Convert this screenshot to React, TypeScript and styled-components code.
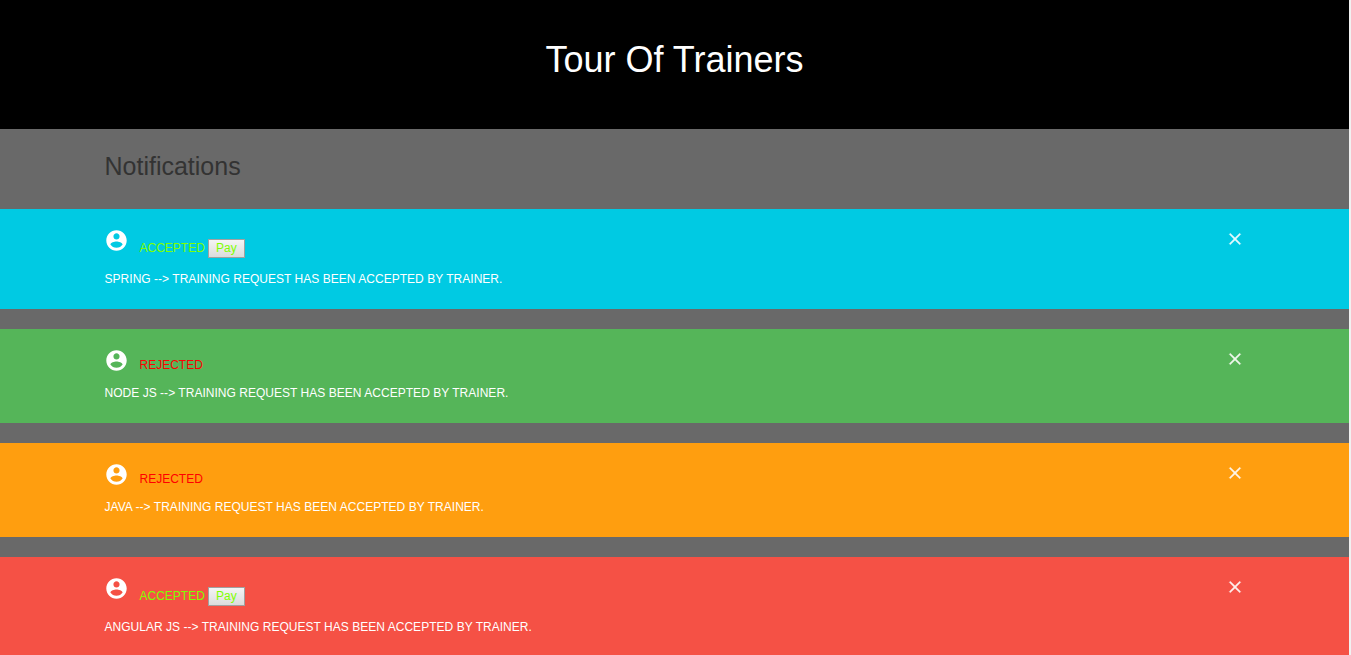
import React from 'react';
import styled, { createGlobalStyle } from 'styled-components';

const GlobalStyle = createGlobalStyle`
  html, body { margin: 0; height: 100%; overflow: hidden; }
  body {
    background: #f1f1f1;
    font-family: Arial, "Liberation Sans", sans-serif;
  }
`;

const Page = styled.div`
  width: calc(100vw - 2px);
  height: 100vh;
  overflow: hidden;
  background: #696969;
`;

const Header = styled.header`
  height: 129px;
  box-sizing: border-box;
  padding-top: 40px;
  background: #000;
  text-align: center;
`;

const Title = styled.h1`
  margin: 0;
  color: #fff;
  font-size: 36px;
  font-weight: 400;
  line-height: 40px;
`;

const Container = styled.div`
  box-sizing: border-box;
  width: 1140px;
  margin: 0 auto;
`;

const Heading = styled.h3`
  margin: 0;
  height: 80px;
  box-sizing: border-box;
  padding-top: 20px;
  color: #333;
  font-size: 25px;
  font-weight: 400;
  line-height: 35px;
`;

const Alert = styled.section<{ $color: string; $tall: boolean }>`
  box-sizing: border-box;
  height: ${(p) => (p.$tall ? 100 : 94)}px;
  margin-bottom: 20px;
  padding-top: 19px;
  background: ${(p) => p.$color};
  color: #fff;
  font-size: 12px;
  line-height: 18px;
  text-transform: uppercase;
`;

const AlertTop = styled.div<{ $tall: boolean }>`
  display: flex;
  align-items: flex-start;
  height: ${(p) => (p.$tall ? 42 : 36)}px;
`;

const Avatar = styled.svg`
  width: 25px;
  height: 25px;
  margin: 0 11px 0 -1px;
  fill: #fff;
`;

const Status = styled.span<{ $accepted: boolean }>`
  margin-top: ${(p) => (p.$accepted ? 11 : 8)}px;
  color: ${(p) => (p.$accepted ? '#7fff00' : '#f00')};
`;

const PayButton = styled.button`
  box-sizing: border-box;
  width: 37px;
  height: 19px;
  margin: 11px 0 0 3px;
  padding: 0;
  border: 1px solid #a0a0a0;
  background: linear-gradient(#f4f4f4, #dcdcdc);
  color: #7fff00;
  font: 12px/15px Arial, "Liberation Sans", sans-serif;
`;

const Close = styled.svg`
  width: 20px;
  height: 20px;
  margin: 1px 0 0 auto;
  fill: #fff;
  stroke: #fff;
  stroke-width: 0.3;
  opacity: 0.9;
`;

const Message = styled.div`
  letter-spacing: 0.03px;
`;

const notices = [
  { topic: 'Spring', accepted: true, color: '#00cae3' },
  { topic: 'Node JS', accepted: false, color: '#55b559' },
  { topic: 'Java', accepted: false, color: '#ff9e0f' },
  { topic: 'Angular JS', accepted: true, color: '#f55145' },
];

export default function App() {
  return (
    <>
      <GlobalStyle />
      <Page>
        <Header>
          <Title>Tour Of Trainers</Title>
        </Header>
        <Container>
          <Heading>Notifications</Heading>
        </Container>
        {notices.map(({ topic, accepted, color }) => (
          <Alert key={topic} $color={color} $tall={accepted}>
            <Container>
              <AlertTop $tall={accepted}>
                <Avatar viewBox="0 0 24 24">
                  <path
                    transform="translate(0.24 0.24) scale(0.98)"
                    d="M12 2C6.48 2 2 6.48 2 12s4.48 10 10 10 10-4.48 10-10S17.52 2 12 2zm0 3c1.66 0 3 1.34 3 3s-1.34 3-3 3-3-1.34-3-3 1.34-3 3-3zm0 14.2c-2.5 0-4.71-1.28-6-3.22.03-1.99 4-3.08 6-3.08 1.99 0 5.97 1.09 6 3.08-1.29 1.94-3.5 3.22-6 3.22z"
                  />
                </Avatar>
                <Status $accepted={accepted}>{accepted ? 'Accepted' : 'Rejected'}</Status>
                {accepted && <PayButton>Pay</PayButton>}
                <Close viewBox="0 0 24 24">
                  <path d="M19 6.41L17.59 5 12 10.59 6.41 5 5 6.41 10.59 12 5 17.59 6.41 19 12 13.41 17.59 19 19 17.59 13.41 12z" />
                </Close>
              </AlertTop>
              <Message>{topic} --&gt; Training request has been accepted by trainer.</Message>
            </Container>
          </Alert>
        ))}
      </Page>
    </>
  );
}
